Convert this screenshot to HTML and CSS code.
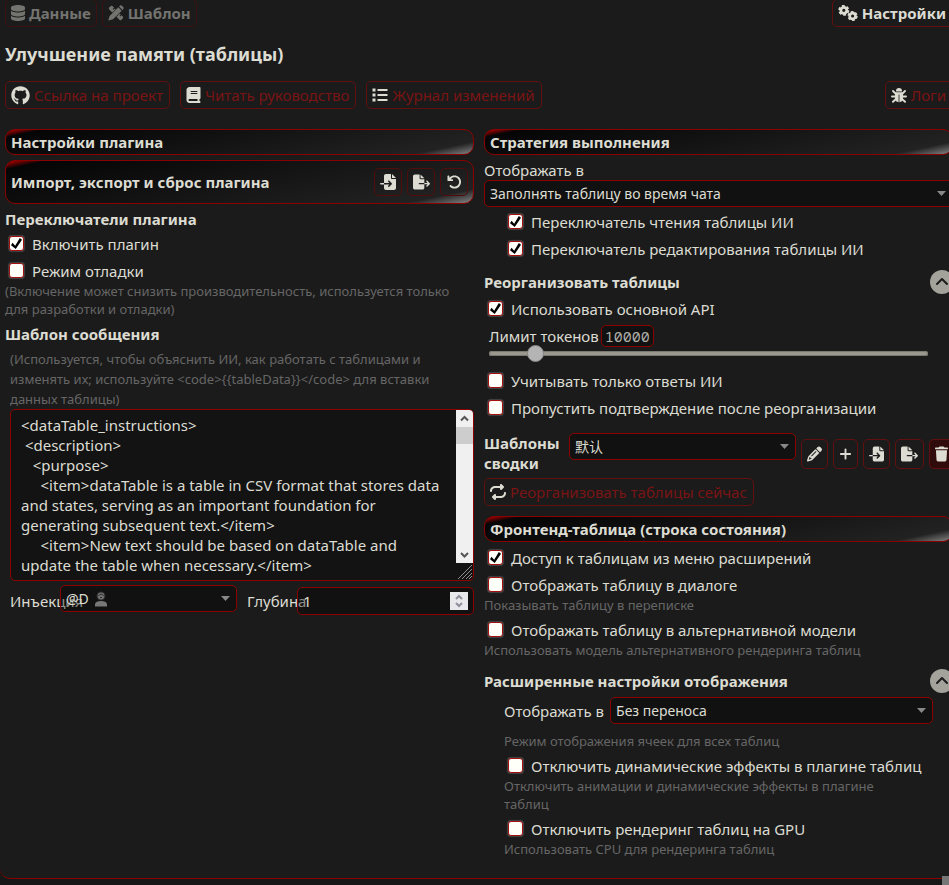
FILE: index.html
```html
<!DOCTYPE html>
<html lang="ru">
<head>
<meta charset="utf-8">
<meta name="viewport" content="width=device-width, initial-scale=1">
<title>Улучшение памяти (таблицы)</title>
<link rel="stylesheet" href="styles.css">
</head>
<body>
<svg class="sprite" aria-hidden="true">
  <symbol id="i-db" viewBox="0 0 448 512"><path d="M448 80v48c0 44.200-100.300 80-224 80S0 172.200 0 128V80C0 35.800 100.300 0 224 0S448 35.800 448 80zM393.200 214.700c20.800-7.400 39.900-16.900 54.800-28.600V288c0 44.200-100.300 80-224 80S0 332.200 0 288V186.100c14.900 11.800 34 21.200 54.800 28.600C99.700 230.700 159.500 240 224 240s124.300-9.300 169.200-25.300zM0 346.100c14.900 11.800 34 21.200 54.800 28.600C99.700 390.700 159.500 400 224 400s124.300-9.300 169.200-25.300c20.800-7.400 39.900-16.900 54.800-28.600V432c0 44.200-100.300 80-224 80S0 476.200 0 432z"/></symbol>
  <symbol id="i-design" viewBox="0 0 16 16"><path d="M1.200 2.600 2.800 1Q3.600.3 4.400 1L6 2.600 4.700 3.900l.8.800L6.800 3.400 7.600 4.300 4.300 7.600 1.200 4.400Q.4 3.500 1.200 2.600zM8.500 11.700 11.700 8.500l1 1-1.300 1.300.8.800 1.300-1.300 1.300 1.300q.9.900 0 1.700L13.300 14.900q-.8.800-1.700 0zM10.300 2.300 13.700 5.700 5 14.300.7 15.400Q.2 15.500.4 15L1.600 11zM11.100 1.500 12 .6Q13 0 13.900.7L15.300 2.100Q16 3 15.400 4L14.500 4.900z"/></symbol>
  <symbol id="i-gears" viewBox="0 0 20 16"><g fill="none" stroke="currentColor"><circle cx="5.800" cy="5.300" r="3" stroke-width="2.800"/><circle cx="5.800" cy="5.300" r="4.600" stroke-width="1.800" stroke-dasharray="2.800 2.017"/><circle cx="14.600" cy="11" r="2.900" stroke-width="2.700"/><circle cx="14.600" cy="11" r="4.300" stroke-width="1.600" stroke-dasharray="2.600 1.903"/></g></symbol>
  <symbol id="i-github" viewBox="0 0 496 512"><path d="M244.800 8C106.100 8 0 113.300 0 252c0 110.900 69.800 205.800 169.500 239.200 12.800 2.300 17.300-5.600 17.300-12.100 0-6.200-.3-40.400-.3-61.400 0 0-70 15-84.700-29.800 0 0-11.400-29.100-27.800-36.600 0 0-22.900-15.700 1.600-15.400 0 0 24.900 2 38.600 25.800 21.900 38.600 58.600 27.500 72.900 20.900 2.300-16 8.800-27.100 16-33.700-55.900-6.200-112.300-14.300-112.300-110.500 0-27.500 7.600-41.300 23.600-58.900-2.600-6.500-11.100-33.300 2.600-67.900 20.900-6.500 69 27 69 27 20-5.600 41.500-8.500 62.800-8.500s42.800 2.900 62.800 8.500c0 0 48.100-33.600 69-27 13.700 34.700 5.200 61.400 2.600 67.900 16 17.700 25.800 31.500 25.800 58.900 0 96.500-58.900 104.200-114.800 110.500 9.200 7.900 17 22.900 17 46.400 0 33.700-.3 75.400-.3 83.600 0 6.500 4.600 14.400 17.300 12.100C428.200 457.800 496 362.900 496 252 496 113.300 383.500 8 244.800 8z"/></symbol>
  <symbol id="i-book" viewBox="0 0 448 512"><path d="M96 0C43 0 0 43 0 96V416c0 53 43 96 96 96H384h32c17.700 0 32-14.300 32-32s-14.300-32-32-32V384c17.700 0 32-14.300 32-32V32c0-17.700-14.300-32-32-32H384 96zm0 384H352v64H96c-17.700 0-32-14.300-32-32s14.300-32 32-32zm32-240c0-8.800 7.200-16 16-16H336c8.800 0 16 7.200 16 16s-7.200 16-16 16H144c-8.800 0-16-7.200-16-16zm16 48H336c8.800 0 16 7.200 16 16s-7.200 16-16 16H144c-8.800 0-16-7.200-16-16s7.200-16 16-16z"/></symbol>
  <symbol id="i-list" viewBox="0 0 16 16"><path d="M.5 1.500h3v3h-3zM.5 6.500h3v3h-3zM.5 11.500h3v3h-3zM5.500 2h10v2h-10zM5.500 7h10v2h-10zM5.500 12h10v2h-10z"/></symbol>
  <symbol id="i-bug" viewBox="0 0 16 16"><path d="M5 4a3 3 0 0 1 6 0v.5H5z"/><path d="M4 5.300h8V11a4 4.200 0 0 1-3.600 4.200V7.500h-.8v7.700A4 4.200 0 0 1 4 11z"/><path fill="none" stroke="currentColor" stroke-width="1.900" stroke-linecap="round" d="M5 7 2 4M11 7l3-3M4.500 9.500H1M11.500 9.500H15M5 12l-3 2.800M11 12l3 2.800"/></symbol>
  <symbol id="i-import" viewBox="0 0 512 512"><path d="M128 64c0-35.300 28.700-64 64-64H352V128c0 17.700 14.300 32 32 32H512V448c0 35.300-28.700 64-64 64H192c-35.300 0-64-28.700-64-64V336H302.100l-39 39c-9.400 9.400-9.400 24.600 0 33.900s24.600 9.400 33.900 0l80-80c9.400-9.400 9.400-24.600 0-33.900l-80-80c-9.400-9.400-24.600-9.400-33.900 0s-9.400 24.600 0 33.900l39 39H128V64zm0 224v48H24c-13.300 0-24-10.700-24-24s10.700-24 24-24H128zM512 128H384V0L512 128z"/></symbol>
  <symbol id="i-export" viewBox="0 0 576 512"><path d="M0 64C0 28.700 28.700 0 64 0H224V128c0 17.700 14.300 32 32 32H384V288H216c-13.300 0-24 10.700-24 24s10.700 24 24 24H384V448c0 35.300-28.700 64-64 64H64c-35.300 0-64-28.700-64-64V64zM384 336V288H494.100l-39-39c-9.400-9.400-9.400-24.600 0-33.900s24.600-9.400 33.900 0l80 80c9.400 9.400 9.400 24.600 0 33.900l-80 80c-9.400 9.400-24.600 9.400-33.900 0s-9.400-24.600 0-33.900l39-39H384zm0-208H256V0L384 128z"/></symbol>
  <symbol id="i-undo" viewBox="0 0 512 512"><path d="M125.700 160H176c17.700 0 32 14.300 32 32s-14.300 32-32 32H48c-17.700 0-32-14.300-32-32V64c0-17.700 14.300-32 32-32s32 14.300 32 32v51.200L97.600 97.600c87.500-87.500 229.300-87.500 316.800 0s87.500 229.300 0 316.800s-229.300 87.500-316.800 0c-12.500-12.500-12.500-32.800 0-45.300s32.800-12.500 45.300 0c62.500 62.500 163.800 62.500 226.300 0s62.500-163.800 0-226.300s-163.800-62.500-226.300 0L125.700 160z"/></symbol>
  <symbol id="i-repeat" viewBox="0 0 512 512"><path d="M0 224c0 17.700 14.300 32 32 32s32-14.300 32-32c0-53 43-96 96-96H320v32c0 12.900 7.800 24.600 19.800 29.600s25.700 2.200 34.900-6.900l64-64c12.500-12.500 12.500-32.800 0-45.300l-64-64c-9.200-9.200-22.900-11.900-34.900-6.900S320 19.100 320 32V64H160C71.600 64 0 135.600 0 224zm512 64c0-17.700-14.300-32-32-32s-32 14.300-32 32c0 53-43 96-96 96H192V352c0-12.900-7.800-24.600-19.800-29.600s-25.700-2.200-34.900 6.900l-64 64c-12.500 12.500-12.500 32.800 0 45.300l64 64c9.200 9.200 22.900 11.900 34.900 6.900s19.800-16.600 19.800-29.600V448H352c88.400 0 160-71.600 160-160z"/></symbol>
  <symbol id="i-pencil" viewBox="0 0 512 512"><path d="M410.300 231l11.300-11.300-33.900-33.900-62.100-62.100L291.700 89.800l-11.300 11.300-22.600 22.600L58.600 322.900c-10.400 10.400-18 23.300-22.200 37.400L1 480.700c-2.500 8.400-.2 17.500 6.100 23.700s15.300 8.500 23.700 6.100l120.300-35.400c14.100-4.200 27-11.800 37.400-22.200L387.700 253.700 410.300 231zM160 399.400l-9.100 22.700c-4 3.100-8.500 5.400-13.300 6.900L59.400 452l23-78.100c1.400-4.900 3.800-9.400 6.900-13.300l22.700-9.100v32c0 8.800 7.200 16 16 16h32zM362.700 18.700L348.300 33.200 325.700 55.800 314.300 67.100l33.900 33.900 62.100 62.100 33.900 33.900 11.300-11.300 22.600-22.600 14.500-14.500c25-25 25-65.500 0-90.500L453.300 18.700c-25-25-65.500-25-90.500 0zm-47.400 168l-144 144c-6.200 6.200-16.400 6.200-22.600 0s-6.200-16.400 0-22.600l144-144c6.200-6.200 16.400-6.200 22.600 0s6.200 16.400 0 22.600z"/></symbol>
  <symbol id="i-plus" viewBox="0 0 14 16"><path d="M6 3a1 1 0 0 1 2 0v4h4a1 1 0 0 1 0 2H8v4a1 1 0 0 1-2 0V9H2a1 1 0 0 1 0-2h4z"/></symbol>
  <symbol id="i-trash" viewBox="0 0 448 512"><path d="M135.200 17.700L128 32H32C14.300 32 0 46.300 0 64S14.300 96 32 96H416c17.700 0 32-14.300 32-32s-14.300-32-32-32H320l-7.200-14.300C307.400 6.800 296.300 0 284.200 0H163.800c-12.100 0-23.200 6.800-28.600 17.700zM416 128H32L53.200 467c1.600 25.300 22.600 45 47.900 45H346.900c25.300 0 46.300-19.700 47.900-45L416 128z"/></symbol>
  <symbol id="i-up" viewBox="0 0 24 24"><path fill="none" stroke="currentColor" stroke-width="2" stroke-linecap="round" stroke-linejoin="round" d="m7 14 5-5 5 5"/></symbol>
  <symbol id="i-user" viewBox="0 0 14 16"><circle cx="7" cy="5" r="4.600" fill="#282828"/><circle cx="7" cy="5" r="3.400" fill="#727272"/><path d="M4.300 4.500Q7 1.500 9.700 4.500M6 6.500h2" fill="none" stroke="#2c2c2c"/><path d="M1 15.500v-2Q1 10 7 10t6 3.500v2z" fill="#777"/></symbol>
</svg>

<main class="panel">
  <nav class="tabs">
    <button class="tab" type="button"><svg class="ic w14"><use href="#i-db"/></svg>Данные</button>
    <button class="tab" type="button"><svg class="ic w16"><use href="#i-design"/></svg>Шаблон</button>
    <button class="tab tab-active" type="button"><svg class="ic w20"><use href="#i-gears"/></svg>Настройки</button>
  </nav>

  <h1>Улучшение памяти (таблицы)</h1>

  <div class="links">
    <a class="link-btn" href="#"><svg class="ic w19"><use href="#i-github"/></svg>Ссылка на проект</a>
    <a class="link-btn" href="#"><svg class="ic w15"><use href="#i-book"/></svg>Читать руководство</a>
    <a class="link-btn" href="#"><svg class="ic w16"><use href="#i-list"/></svg>Журнал изменений</a>
    <a class="link-btn push" href="#"><svg class="ic w16"><use href="#i-bug"/></svg>Логи</a>
  </div>

  <div class="columns">
    <section class="col">
      <h2 class="bar">Настройки плагина</h2>
      <div class="bar bar-tall">
        <h2>Импорт, экспорт и сброс плагина</h2>
        <div class="bar-actions">
          <button class="icon-btn" type="button" aria-label="Импорт"><svg class="ic w16"><use href="#i-import"/></svg></button>
          <button class="icon-btn" type="button" aria-label="Экспорт"><svg class="ic w17"><use href="#i-export"/></svg></button>
          <button class="icon-btn" type="button" aria-label="Сброс"><svg class="ic w15"><use href="#i-undo"/></svg></button>
        </div>
      </div>

      <h3 class="sub">Переключатели плагина</h3>
      <label class="check"><input type="checkbox" checked>Включить плагин</label>
      <label class="check"><input type="checkbox">Режим отладки</label>
      <p class="note">(Включение может снизить производительность, используется только для разработки и отладки)</p>

      <h3 class="sub">Шаблон сообщения</h3>
      <div class="template">
        <label class="note note-open" for="tpl">(Используется, чтобы объяснить ИИ, как работать с таблицами и изменять их; используйте &lt;code&gt;{{tableData}}&lt;/code&gt; для вставки данных таблицы)</label>
        <div class="editor">
          <textarea id="tpl" spellcheck="false">&lt;dataTable_instructions&gt;
 &lt;description&gt;
   &lt;purpose&gt;
     &lt;item&gt;dataTable is a table in CSV format that stores data and states, serving as an important foundation for generating subsequent text.&lt;/item&gt;
     &lt;item&gt;New text should be based on dataTable and update the table when necessary.&lt;/item&gt;</textarea>
          <div class="scroll" aria-hidden="true">
            <div class="scroll-bar">
              <svg viewBox="0 0 17 17"><path d="m5 10.500 3.500-3.500 3.500 3.500"/></svg>
              <span class="scroll-thumb"></span>
              <svg class="scroll-down" viewBox="0 0 17 17"><path d="m5 7 3.500 3.500L12 7"/></svg>
            </div>
            <svg class="grip" viewBox="0 0 17 17"><path d="M2 16 16 2M6 16 16 6M10 16l6-6M13 16l3-3"/></svg>
          </div>
        </div>
        <div class="inject">
          <div class="inject-field">
            <label for="inj">Инъекция</label>
            <div class="select"><select id="inj"><option>@D</option></select><svg class="select-user" aria-hidden="true"><use href="#i-user"/></svg></div>
          </div>
          <div class="inject-field depth">
            <label for="depth">Глубина</label>
            <div class="number">
              <input id="depth" type="number" value="1">
              <svg class="spin" viewBox="0 0 18 18" aria-hidden="true"><path d="m6 7 3-3 3 3M6 11l3 3 3-3"/></svg>
            </div>
          </div>
        </div>
      </div>
    </section>

    <section class="col">
      <h2 class="bar">Стратегия выполнения</h2>
      <label class="field-label" for="mode">Отображать в</label>
      <div class="select"><select id="mode"><option>Заполнять таблицу во время чата</option></select></div>
      <div class="indent mode-checks">
        <label class="check"><input type="checkbox" checked>Переключатель чтения таблицы ИИ</label>
        <label class="check"><input type="checkbox" checked>Переключатель редактирования таблицы ИИ</label>
      </div>

      <div class="fold"><h3>Реорганизовать таблицы</h3><button class="round" type="button" aria-label="Свернуть"><svg><use href="#i-up"/></svg></button></div>
      <label class="check"><input type="checkbox" checked>Использовать основной API</label>
      <div class="limit">
        <div class="limit-head"><label for="limit">Лимит токенов</label><output class="limit-value" for="limit">10000</output></div>
        <input id="limit" type="range" min="1000" max="100000" value="10000">
      </div>
      <label class="check"><input type="checkbox">Учитывать только ответы ИИ</label>
      <label class="check"><input type="checkbox">Пропустить подтверждение после реорганизации</label>

      <div class="summary">
        <label for="sum">Шаблоны сводки</label>
        <div class="select"><select id="sum"><option>默认</option></select></div>
        <div class="summary-actions">
          <button class="tool-btn" type="button" aria-label="Изменить"><svg class="ic w15"><use href="#i-pencil"/></svg></button>
          <button class="tool-btn" type="button" aria-label="Добавить"><svg class="ic w13"><use href="#i-plus"/></svg></button>
          <button class="tool-btn" type="button" aria-label="Импорт"><svg class="ic w15"><use href="#i-import"/></svg></button>
          <button class="tool-btn" type="button" aria-label="Экспорт"><svg class="ic w17"><use href="#i-export"/></svg></button>
          <button class="tool-btn danger" type="button" aria-label="Удалить"><svg class="ic w13"><use href="#i-trash"/></svg></button>
        </div>
      </div>
      <button class="link-btn now" type="button"><svg class="ic w16"><use href="#i-repeat"/></svg>Реорганизовать таблицы сейчас</button>

      <h2 class="bar">Фронтенд-таблица (строка состояния)</h2>
      <label class="check"><input type="checkbox" checked>Доступ к таблицам из меню расширений</label>
      <label class="check"><input type="checkbox">Отображать таблицу в диалоге</label>
      <p class="note">Показывать таблицу в переписке</p>
      <label class="check spaced"><input type="checkbox">Отображать таблицу в альтернативной модели</label>
      <p class="note">Использовать модель альтернативного рендеринга таблиц</p>

      <div class="fold"><h3>Расширенные настройки отображения</h3><button class="round" type="button" aria-label="Свернуть"><svg><use href="#i-up"/></svg></button></div>
      <div class="indent">
        <div class="wrap-field">
          <label for="wrap">Отображать в</label>
          <div class="select"><select id="wrap"><option>Без переноса</option></select></div>
        </div>
        <p class="note">Режим отображения ячеек для всех таблиц</p>
        <label class="check spaced"><input type="checkbox">Отключить динамические эффекты в плагине таблиц</label>
        <p class="note">Отключить анимации и динамические эффекты в плагине таблиц</p>
        <label class="check spaced"><input type="checkbox">Отключить рендеринг таблиц на GPU</label>
        <p class="note">Использовать CPU для рендеринга таблиц</p>
      </div>
    </section>
  </div>
</main>
<div class="corner" aria-hidden="true"></div>
</body>
</html>
```
FILE: styles.css
```css
:root {
  --bg: #1b1b1b;
  --text: #dcdcd2;
  --muted: #666;
  --red: #8b0000;
  --red-dim: #640f0f;
  --red-text: #7a1414;
  --field: rgba(0, 0, 0, 0.35);
}

* { box-sizing: border-box; }

body {
  margin: 0;
  min-height: 100vh;
  overflow: hidden;
  background: #171717;
  color: var(--text);
  font: 15px/20px "Noto Sans", "Noto Sans CJK SC", sans-serif;
}

h1, h2, h3, p { margin: 0; font-size: 15px; }
p { font-weight: 400; }
button, input, select, textarea { font: inherit; color: inherit; margin: 0; }

.sprite { position: absolute; width: 0; height: 0; }
.ic { flex: none; height: 16px; fill: currentColor; }
.w13 { width: 13px; }
.w14 { width: 14px; }
.w15 { width: 15px; }
.w16 { width: 16px; }
.w17 { width: 17px; }
.w19 { width: 19px; height: 19px; }
.w20 { width: 20px; }

.panel {
  margin-right: -4px;
  padding: 0 0 20px 5px;
  background: var(--bg);
  border-bottom: 1px solid var(--red);
  border-radius: 0 0 0 10px;
}

.tabs { display: flex; gap: 5px; margin-top: -1px; }
.tab {
  display: flex;
  align-items: center;
  gap: 4px;
  height: 28px;
  padding: 0 5px;
  border: 1px solid #3c1111;
  border-radius: 5px;
  background: none;
  color: #737370;
  font-weight: 700;
}
.tab-active { margin-left: auto; padding: 0 6px 0 5px; border-color: var(--red-dim); color: var(--text); }

h1 { margin: 15px 0 14px; font-size: 18px; line-height: 25px; }

.links { display: flex; gap: 10px; margin-bottom: 20px; }
.link-btn {
  display: flex;
  align-items: center;
  gap: 4px;
  height: 28px;
  padding: 0 6px 0 5px;
  border: 1px solid var(--red-dim);
  border-radius: 5px;
  background: none;
  color: var(--red-text);
  text-decoration: none;
}
.link-btn .ic { color: var(--text); }
.push { margin-left: auto; }

.columns { display: grid; grid-template-columns: 1fr 1fr; gap: 10px; }
.col { min-width: 0; }

.bar {
  display: flex;
  align-items: center;
  height: 26px;
  margin-bottom: 5px;
  padding: 0 5px;
  border: 1px solid var(--red);
  border-radius: 10px;
  background: linear-gradient(168deg, #a00000 1%, #050505 6%, #222 90%, #848484 100%);
}
.bar-tall { height: 44px; margin-bottom: 4px; justify-content: space-between; }
.bar-actions { display: flex; gap: 5px; }
.icon-btn, .tool-btn {
  display: flex;
  align-items: center;
  justify-content: center;
  width: 28px;
  height: 28px;
  padding: 0;
  border: 1px solid var(--red-dim);
  border-radius: 5px;
  background: none;
}
.icon-btn { border-color: #520c0c; }

.sub { line-height: 22px; }

.check { display: flex; align-items: center; gap: 8px; height: 27px; padding-left: 4px; }
.check input {
  appearance: none;
  flex: none;
  display: grid;
  place-items: center;
  width: 15px;
  height: 15px;
  border: 1px solid #a31010;
  border-radius: 3px;
  background: #fffffa;
  box-shadow: 0 0 1px 1px #444;
}
.check input:checked::before {
  content: "";
  width: 11px;
  height: 11px;
  background: #000;
  clip-path: polygon(14% 44%, 0 65%, 43% 100%, 100% 15%, 80% 0, 38% 70%);
}
.spaced { margin-top: 2px; }

.note { color: var(--muted); font-size: 13px; line-height: 18px; }
.check + .note { margin-top: -2px; }
.note + .sub { margin-top: 5px; }
.note-open { display: block; line-height: 20px; }

.template { padding: 4px 0 0 5px; }
.editor {
  display: flex;
  height: 172px;
  border: 1px solid var(--red);
  border-radius: 5px;
  background: #131313;
  overflow: hidden;
}
.editor textarea {
  flex: 1;
  min-width: 0;
  padding: 5px 10px;
  border: 0;
  outline: 0;
  resize: none;
  overflow: hidden;
  background: none;
  line-height: 20px;
}
.scroll { display: flex; flex-direction: column; width: 17px; }
.scroll svg { display: block; width: 17px; height: 17px; fill: none; stroke: #555; stroke-width: 2; }
.scroll-bar { display: flex; flex: 1; flex-direction: column; background: #f0f0f0; }
.scroll-thumb { height: 17px; background: #cdcdcd; }
.scroll .scroll-down { margin-top: auto; }
.scroll .grip { stroke: #909090; stroke-width: 1; }

.inject { display: grid; grid-template-columns: 1fr 1fr; gap: 10px; padding-top: 4px; }
.inject-field { display: flex; align-items: flex-start; }
.inject-field label { flex: 0 0 50px; width: 50px; padding-top: 6px; white-space: nowrap; }
.inject-field .select, .number { flex: 1; min-width: 0; }
.depth { padding-top: 2px; }
.depth label { padding-top: 4px; }

.select { position: relative; }
.select select {
  appearance: none;
  display: block;
  width: 100%;
  height: 27px;
  padding: 0 20px 0 5px;
  border: 1px solid var(--red);
  border-radius: 5px;
  background: var(--field);
  font-size: 14px;
}
.select::after {
  content: "";
  position: absolute;
  top: 11px;
  right: 7px;
  width: 9px;
  height: 5px;
  background: #888;
  clip-path: polygon(0 0, 100% 0, 50% 100%);
}
.select-user { position: absolute; top: 6px; left: 34px; width: 14px; height: 16px; }

.number { position: relative; }
.number input {
  appearance: textfield;
  display: block;
  width: 100%;
  height: 28px;
  padding: 0 5px;
  border: 1px solid var(--red);
  border-radius: 5px;
  background: var(--field);
}
.number input::-webkit-inner-spin-button { appearance: none; }
.spin {
  position: absolute;
  top: 5px;
  right: 6px;
  width: 18px;
  height: 18px;
  background: #e9e9ed;
  fill: none;
  stroke: #8f8f9d;
  stroke-width: 2;
}

.field-label { display: block; }
.indent { padding: 0 20px; }
.mode-checks { padding-top: 1px; }

.fold { display: flex; align-items: center; justify-content: space-between; height: 24px; margin: 8px 0 1px; }
.note + .fold { margin-top: 10px; }
.round {
  width: 24px;
  height: 24px;
  margin-right: -1px;
  padding: 0;
  border: 0;
  border-radius: 50%;
  background: #a3a39b;
  color: #1b1b1b;
}
.round svg { display: block; width: 24px; height: 24px; }

.limit { padding: 3px 25px 7px 5px; }
.limit-head { display: flex; align-items: center; gap: 2px; height: 22px; }
.limit-value {
  height: 22px;
  padding: 0 3px;
  border: 1px solid var(--red);
  border-radius: 5px;
  background: #111;
  color: #b0b0aa;
  font: 15px/21px "Noto Sans Mono", "DejaVu Sans Mono", monospace;
}
.limit input {
  appearance: none;
  display: block;
  width: 100%;
  height: 5px;
  margin: 4px 0;
  border-radius: 3px;
  background: #9b9b91;
  box-shadow: inset 0 0 1px 1px #77776f;
}
.limit input::-webkit-slider-thumb {
  appearance: none;
  width: 17px;
  height: 17px;
  border: 1px solid #858585;
  border-radius: 50%;
  background: #b4b4b4;
}

.summary { display: flex; gap: 5px; margin: 12px 0 5px; align-items: flex-start; }
.summary > label { flex: 0 0 80px; font-weight: 700; }
.summary .select { flex: 1; min-width: 0; }
.summary-actions { display: flex; gap: 5px; padding-top: 6px; margin-right: -1px; }
.tool-btn { width: auto; height: 30px; padding: 0 5px; }
.danger { background: #300b0b; }
.now { margin-bottom: 10px; }
.now + .bar { margin-bottom: 2px; }

.wrap-field { display: flex; align-items: center; gap: 6px; margin: 4px 0 8px; }
.wrap-field .select { flex: 1; }
.indent .note { padding-right: 40px; }

.corner { position: fixed; right: 0; bottom: 0; width: 7px; height: 9px; background: #777; }
```
